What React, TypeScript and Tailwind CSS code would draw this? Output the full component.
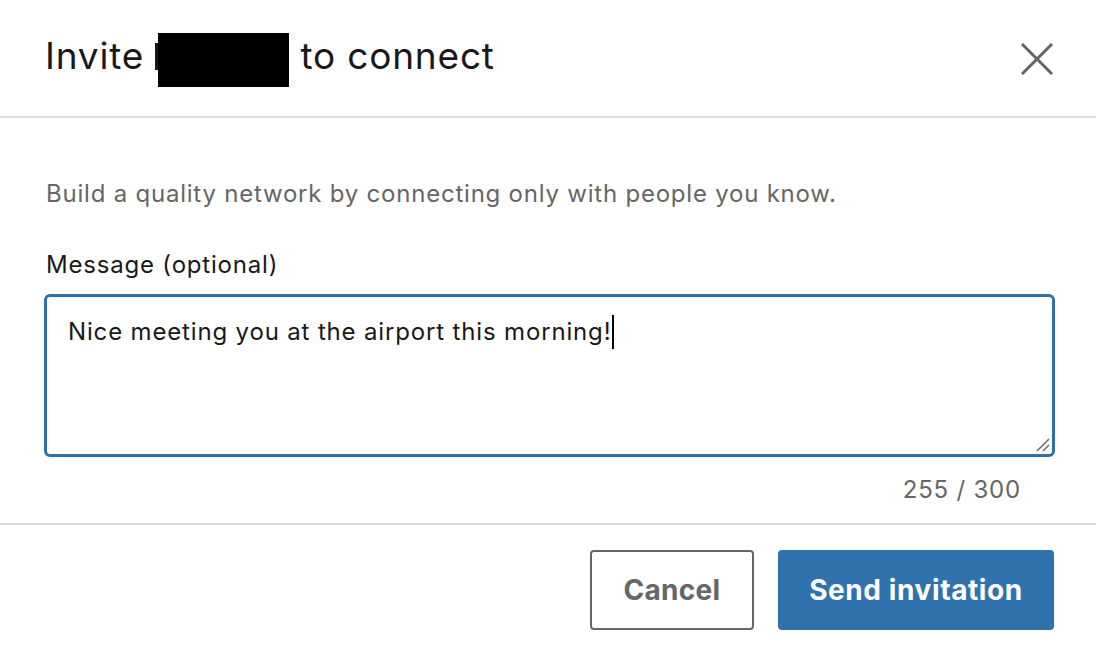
export default function App() {
  return (
    <div className="w-[1096px] h-[648px] bg-white flex flex-col font-['Inter',sans-serif] overflow-hidden">
      {/* header */}
      <div className="h-[118px] shrink-0 border-b-2 border-[#dcdcdc] flex items-center justify-between pl-[45px] pr-[39px]">
        <h2 className="text-[37px] leading-[44px] tracking-[0.8px] text-[#191919] font-normal flex items-center pb-[4px]">
          <span>Invite&nbsp;</span>
          <span className="w-[3px] h-[27px] bg-[#191919] mt-[1px]" />
          <span className="inline-block w-[131px] h-[54px] bg-black mt-[8px]" />
          <span>&nbsp;to connect</span>
        </h2>
        <button className="w-[40px] h-[40px] flex items-center justify-center mt-[2px]">
          <svg width="32" height="32" viewBox="0 0 32 32" fill="none" stroke="#666666" strokeWidth="3" strokeLinecap="square">
            <path d="M2 2 L30 30 M30 2 L2 30" />
          </svg>
        </button>
      </div>

      {/* body */}
      <div className="h-[405px] shrink-0 pl-[44px] pr-[41px] pt-[60px] flex flex-col">
        <p className="text-[24px] leading-[32px] tracking-[0.78px] text-[#666666] ml-[2px]">
          Build a quality network by connecting only with people you know.
        </p>
        <label className="mt-[39px] text-[24px] leading-[32px] tracking-[0.8px] text-[#191919] ml-[2px]">Message (optional)</label>
        <div className="relative mt-[13px] h-[163px] border-[3px] border-[#2f6fab] rounded-[6px] pl-[21px] pt-[18px]">
          <div className="text-[24px] leading-[32px] tracking-[0.84px] text-[#191919] flex items-center">
            <span>Nice meeting you at the airport this morning!</span>
            <span className="inline-block w-[2px] h-[34px] bg-black ml-[1px]" />
          </div>
          <svg className="absolute right-[2px] bottom-[2px]" width="16" height="16" viewBox="0 0 16 16" stroke="#707070" strokeWidth="1.6">
            <path d="M3 15 L15 3 M9 15 L15 9" />
          </svg>
        </div>
        <div className="mt-[17px] text-[24px] leading-[32px] tracking-[0.8px] text-[#666666] text-right pr-[34px]">255 / 300</div>
      </div>

      {/* footer */}
      <div className="flex-1 border-t-2 border-[#dcdcdc] flex items-start justify-end gap-[24px] pr-[42px] pt-[25px]">
        <button className="w-[164px] h-[80px] border-2 border-[#666666] rounded-[4px] text-[28px] font-bold tracking-[0.3px] text-[#666666]">
          Cancel
        </button>
        <button className="w-[276px] h-[80px] bg-[#2f72ad] rounded-[4px] text-[28px] font-bold tracking-[0.6px] text-white">
          Send invitation
        </button>
      </div>
    </div>
  )
}
